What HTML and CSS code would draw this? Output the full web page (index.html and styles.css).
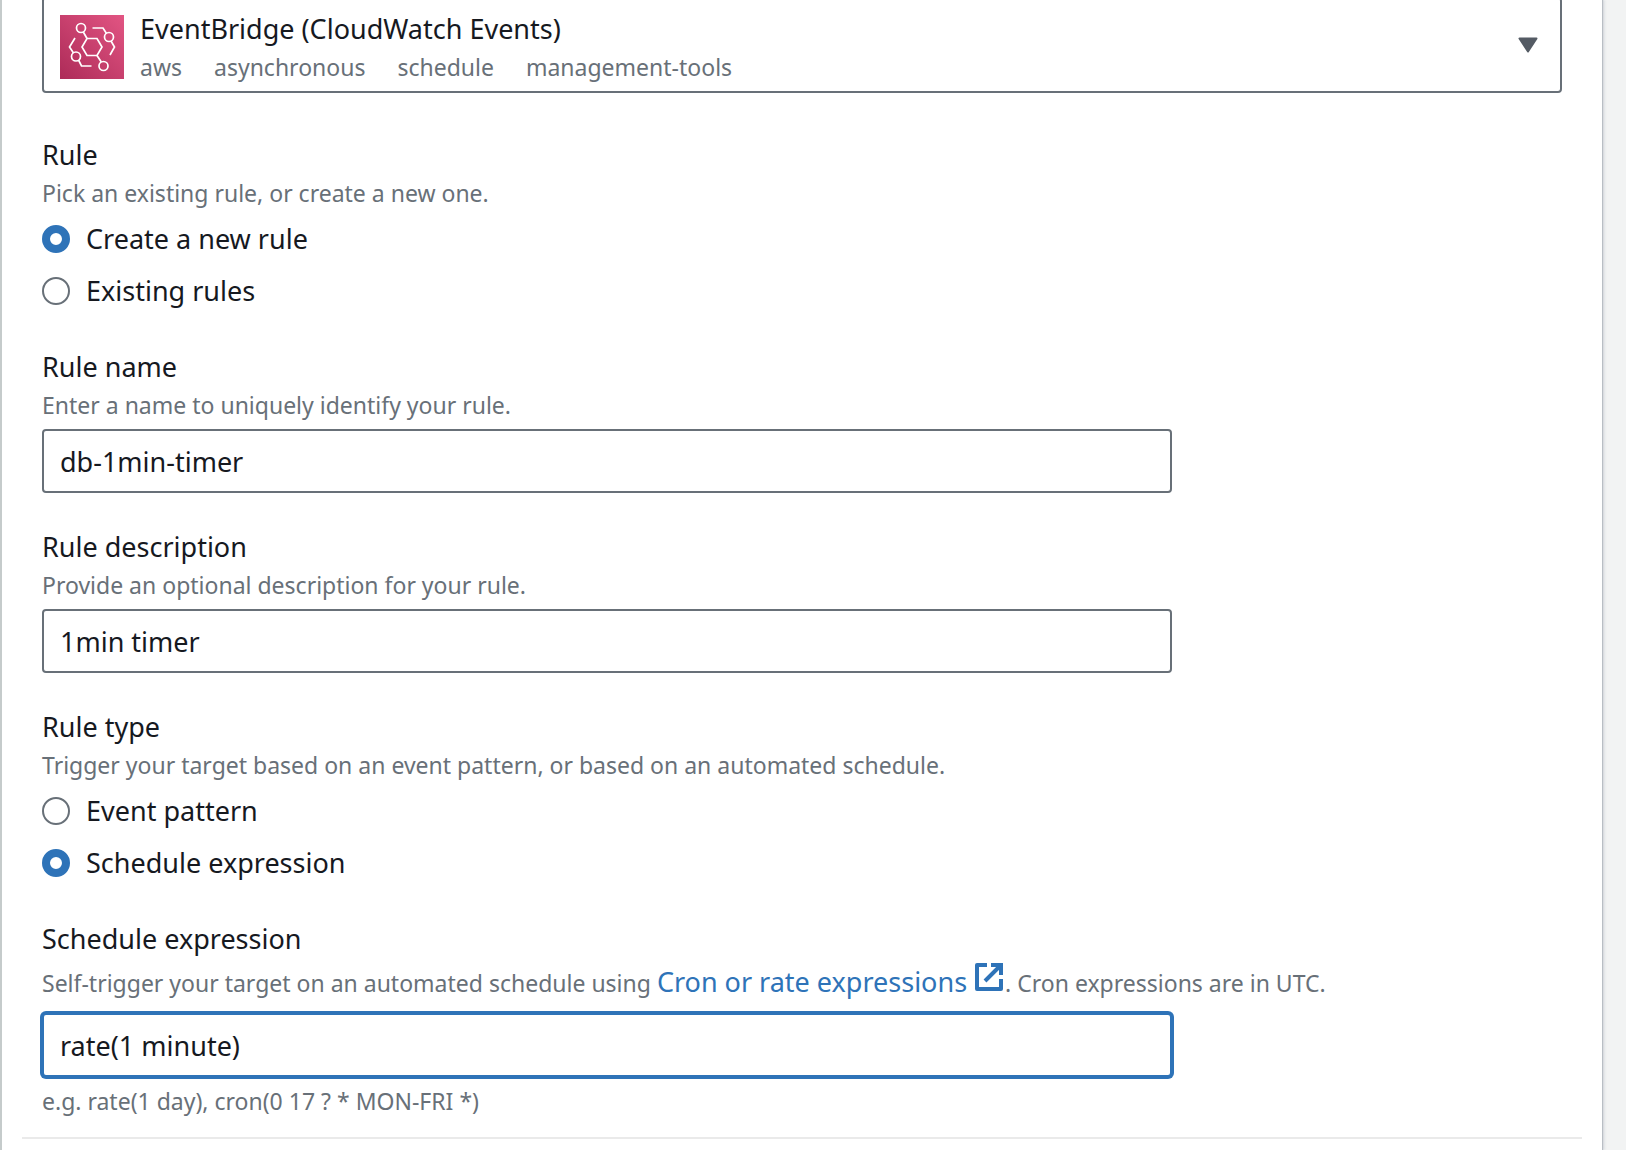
FILE: index.html
```html
<!DOCTYPE html>
<html lang="en">
<head>
  <meta charset="UTF-8">
  <title>Add trigger</title>
  <link rel="stylesheet" href="styles.css">
</head>
<body>

<main class="panel">
  <form class="trigger-form" autocomplete="off">

    <button type="button" class="service-select" aria-haspopup="listbox">
      <svg class="service-icon" viewBox="0 0 64 64" aria-hidden="true">
        <defs>
          <linearGradient id="pink" x1="0" y1="1" x2="1" y2="0">
            <stop offset="0" stop-color="#ad2b58"/>
            <stop offset="1" stop-color="#e25583"/>
          </linearGradient>
        </defs>
        <rect width="64" height="64" fill="url(#pink)"/>
        <g fill="none" stroke="#fff" stroke-width="1.7">
          <path d="M27 23.500H37L42 32L37 40.500H27L22 32Z"/>
          <circle cx="21" cy="13" r="4.500"/>
          <circle cx="49" cy="22" r="4.500"/>
          <circle cx="16" cy="41.500" r="4.500"/>
          <circle cx="43.500" cy="51" r="4.500"/>
          <path d="M23.300 17L27 23.500M37 40.500L41.300 47"/>
          <path d="M32.500 13H43L46.500 18.500M51 26L54.500 32L50 40"/>
          <path d="M15 23L9.500 32L13.500 38M18.500 45L21.500 51H31.500"/>
        </g>
      </svg>
      <span class="service-text">
        <span class="service-name">EventBridge (CloudWatch Events)</span>
        <span class="tags">
          <span>aws</span>
          <span>asynchronous</span>
          <span>schedule</span>
          <span>management-tools</span>
        </span>
      </span>
      <svg class="caret" viewBox="0 0 20 16" aria-hidden="true">
        <path d="M1.500 1.500H18.500L10 14.500Z" fill="#545b64" stroke="#545b64" stroke-width="2" stroke-linejoin="round"/>
      </svg>
    </button>

    <fieldset class="field">
      <legend>Rule</legend>
      <p class="hint">Pick an existing rule, or create a new one.</p>
      <label class="choice"><input type="radio" name="rule" value="new" checked>Create a new rule</label>
      <label class="choice"><input type="radio" name="rule" value="existing">Existing rules</label>
    </fieldset>

    <div class="field">
      <label for="ruleName">Rule name</label>
      <p class="hint">Enter a name to uniquely identify your rule.</p>
      <input type="text" id="ruleName" name="ruleName" value="db-1min-timer">
    </div>

    <div class="field">
      <label for="ruleDescription">Rule description</label>
      <p class="hint">Provide an optional description for your rule.</p>
      <input type="text" id="ruleDescription" name="ruleDescription" value="1min timer">
    </div>

    <fieldset class="field">
      <legend>Rule type</legend>
      <p class="hint">Trigger your target based on an event pattern, or based on an automated schedule.</p>
      <label class="choice"><input type="radio" name="ruleType" value="pattern">Event pattern</label>
      <label class="choice"><input type="radio" name="ruleType" value="schedule" checked>Schedule expression</label>
    </fieldset>

    <div class="field">
      <label for="schedule">Schedule expression</label>
      <p class="hint hint-link">Self-trigger your target on an automated schedule using
        <a href="#">Cron or rate expressions
          <svg class="external" viewBox="0 0 28 28" aria-hidden="true">
            <g fill="none" stroke="currentColor" stroke-width="4">
              <path d="M12 2H2V26H26V16" stroke-linejoin="round"/>
              <path d="M16 2H26V12M25 3L10 18"/>
            </g>
          </svg></a>. Cron expressions are in UTC.</p>
      <input type="text" class="active" id="schedule" name="schedule" value="rate(1 minute)">
      <p class="hint example">e.g. rate(1 day), cron(0 17 ? * MON-FRI *)</p>
    </div>

  </form>
  <hr>
</main>

</body>
</html>
```
FILE: styles.css
```css
* {
  box-sizing: border-box;
}

body {
  margin: 0;
  background: #f2f3f3;
  color: #16191f;
  font-family: "Noto Sans", "Open Sans", sans-serif;
  font-size: 27px;
  font-weight: 450;
  line-height: 44px;
}

/* White card that holds the form */
.panel {
  display: flow-root;
  min-height: 100vh;
  margin-right: 24px;
  padding: 0 20px;
  background: #fff;
  border-left: 2px solid #c5cbcb;
  box-shadow: 1px 0 1px #b9bec4, 3px 0 2px #dfe2e5;
}

.trigger-form {
  padding: 0 20px 20px;
}

/* Service drop-down */
.service-select {
  display: flex;
  align-items: center;
  gap: 16px;
  width: 100%;
  height: 96px;
  margin: -3px 0 40px;
  padding: 0 22px 0 16px;
  border: 2px solid #687078;
  border-radius: 4px;
  background: #fff;
  color: inherit;
  font: inherit;
  text-align: left;
}

.service-icon {
  width: 64px;
  height: 64px;
  margin-top: 4px;
}

.service-text {
  flex: 1;
}

.service-name {
  display: block;
}

.tags {
  display: flex;
  gap: 32px;
  color: #687078;
  font-size: 23px;
  line-height: 32px;
}

.caret {
  width: 20px;
  height: 16px;
}

/* Form fields */
.field {
  margin: 0 0 32px;
  padding: 0;
  border: 0;
}

.field:last-child {
  margin-bottom: 0;
}

.field label,
.field legend {
  display: block;
  padding: 0;
}

.hint {
  margin: 0 0 8px;
  color: #687078;
  font-size: 23px;
  line-height: 32px;
}

.hint-link {
  line-height: 44px;
}

.hint a {
  color: #2e73b8;
  font-size: 27px;
  line-height: 32px;
  text-decoration: none;
}

.hint a:hover {
  text-decoration: underline;
}

.external {
  width: 28px;
  height: 28px;
  margin: 0 2px 0 1px;
  vertical-align: 1px;
}

.example {
  margin: 8px 0 0;
}

input[type=text] {
  display: block;
  width: calc(75% - 10px);
  height: 64px;
  padding: 0 16px;
  border: 2px solid #687078;
  border-radius: 4px;
  background: #fff;
  color: inherit;
  font: inherit;
}

input.active {
  border-color: #2e73b8;
  box-shadow: 0 0 0 2px #2e73b8;
}

/* Radio buttons */
.field .choice {
  display: flex;
  align-items: center;
  gap: 16px;
}

.choice + .choice {
  margin-top: 8px;
}

input[type=radio] {
  appearance: none;
  width: 28px;
  height: 28px;
  margin: 0;
  border: 2px solid #687078;
  border-radius: 50%;
  background: #fff;
}

input[type=radio]:checked {
  border: 8px solid #2e73b8;
}

hr {
  height: 2px;
  margin: 0;
  border: 0;
  background: #eaeaea;
}
```
